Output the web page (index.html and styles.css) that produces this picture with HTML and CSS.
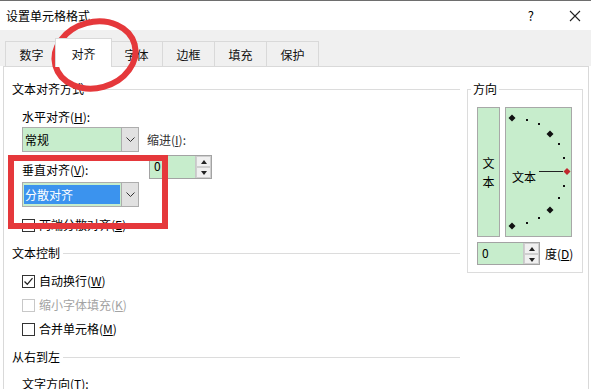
FILE: index.html
```html
<!DOCTYPE html>
<html lang="zh-CN">
<head>
  <meta charset="UTF-8" />
  <title>设置单元格格式</title>
  <link rel="stylesheet" href="styles.css">
</head>
<body>
  <div class="dialog">
    <div class="titlebar">
      <span class="title">设置单元格格式</span>
      <span class="help">?</span>
      <svg class="close" width="12" height="12" viewBox="0 0 12 12">
        <path d="M1 1 L11 11 M11 1 L1 11" stroke="#222" stroke-width="1.1" fill="none"/>
      </svg>
    </div>

    <div class="tabs">
      <div class="tab">数字</div>
      <div class="tab active">对齐</div>
      <div class="tab">字体</div>
      <div class="tab">边框</div>
      <div class="tab">填充</div>
      <div class="tab">保护</div>
    </div>

    <div class="panel">
      <div class="left">
        <div class="group-title"><span>文本对齐方式</span></div>

        <div class="align-grid">
          <div class="lbl lbl-h">水平对齐(<u>H</u>):</div>
          <div class="combo combo-h">
            <div class="combo-value">常规</div>
            <div class="combo-btn">
              <svg width="9" height="6" viewBox="0 0 9 6"><path d="M0.5 0.5 L4.5 4.5 L8.5 0.5" stroke="#333" fill="none"/></svg>
            </div>
          </div>
          <div class="lbl lbl-indent">缩进(<u>I</u>):</div>
          <div class="spin spin-indent">
            <div class="spin-value">0</div>
            <div class="spin-btns">
              <span class="up"></span>
              <span class="down"></span>
            </div>
          </div>
          <div class="lbl lbl-v">垂直对齐(<u>V</u>):</div>
          <div class="combo combo-v">
            <div class="combo-value selected">分散对齐</div>
            <div class="combo-btn">
              <svg width="9" height="6" viewBox="0 0 9 6"><path d="M0.5 0.5 L4.5 4.5 L8.5 0.5" stroke="#333" fill="none"/></svg>
            </div>
          </div>
          <div class="check check-justify">
            <span class="box"></span>
            <span>两端分散对齐(<u>E</u>)</span>
          </div>
        </div>

        <div class="group-title gap-top"><span>文本控制</span></div>
        <div class="check first">
          <span class="box">
            <svg width="11" height="11" viewBox="0 0 11 11"><path d="M1.5 5.5 L4.3 8.3 L9.5 2.2" stroke="#222" stroke-width="1.3" fill="none"/></svg>
          </span>
          <span>自动换行(<u>W</u>)</span>
        </div>
        <div class="check disabled">
          <span class="box"></span>
          <span>缩小字体填充(<u>K</u>)</span>
        </div>
        <div class="check">
          <span class="box"></span>
          <span>合并单元格(<u>M</u>)</span>
        </div>

        <div class="group-title gap-small"><span>从右到左</span></div>
        <div class="lbl lbl-dir">文字方向(<u>T</u>):</div>
      </div>

      <div class="right">
        <fieldset class="orient">
          <legend>方向</legend>
          <div class="orient-row">
            <div class="vbox"><span>文</span><span>本</span></div>
            <div class="arcbox">
              <svg width="65" height="128" viewBox="0 0 65 128">
                <g fill="#111">
                  <polygon points="6,6.5 9.5,10 6,13.5 2.5,10"/>
                  <polygon points="44,22.5 47.5,26 44,29.5 40.5,26"/>
                  <polygon points="44,98.5 47.5,102 44,105.5 40.5,102"/>
                  <polygon points="6,114.5 9.5,118 6,121.5 2.5,118"/>
                  <rect x="20" y="11" width="2" height="2"/>
                  <rect x="32" y="15" width="2" height="2"/>
                  <rect x="52" y="35" width="2" height="2"/>
                  <rect x="57" y="49" width="2" height="2"/>
                  <rect x="57" y="77" width="2" height="2"/>
                  <rect x="52" y="89" width="2" height="2"/>
                  <rect x="32" y="109" width="2" height="2"/>
                  <rect x="20" y="114" width="2" height="2"/>
                </g>
                <line x1="33" y1="63.5" x2="57" y2="63.5" stroke="#222" stroke-width="1"/>
                <polygon points="61,60 64.5,63.5 61,67 57.5,63.5" fill="#c0282d"/>
                <text class="arc-text" x="6" y="74">文本</text>
              </svg>
            </div>
          </div>
          <div class="deg-row">
            <div class="spin spin-deg">
              <div class="spin-value">0</div>
              <div class="spin-btns">
                <span class="up"></span>
                <span class="down"></span>
              </div>
            </div>
            <span>度(<u>D</u>)</span>
          </div>
        </fieldset>
      </div>
    </div>

    <!-- red hand-drawn marks over the dialog -->
    <svg class="marks" width="591" height="389" viewBox="0 0 591 389">
      <ellipse cx="95" cy="55" rx="41" ry="33" transform="rotate(-15 95 55)" fill="none" stroke="#e5383b" stroke-width="6"/>
      <rect x="11" y="158" width="154" height="68" fill="none" stroke="#e5383b" stroke-width="6"/>
    </svg>
  </div>
</body>
</html>
```

FILE: styles.css
```css
body {
  margin: 0;
  background: #fff;
  color: #000;
  font-family: "Noto Sans CJK SC", "Liberation Sans", sans-serif;
  font-size: 12px;
  line-height: 18px;
}
u {
  text-decoration: underline;
  text-underline-offset: 1px;
}
.dialog {
  position: relative;
  width: 591px;
  height: 389px;
  overflow: hidden;
  box-sizing: border-box;
  border-top: 1px solid #6e6e6e;
}
.titlebar {
  display: flex;
  align-items: center;
  height: 29px;
  padding-left: 6px;
  background: #fff;
}
.title {
  flex: 1;
}
.help {
  font-size: 13px;
  margin-right: 35px;
}
.close {
  margin-right: 10px;
}
.tabs {
  display: flex;
  align-items: flex-end;
  height: 36px;
  padding-left: 5px;
  background: #f0f0f0;
}
.tab {
  width: 53px;
  height: 25px;
  box-sizing: border-box;
  margin-right: -1px;
  border: 1px solid #d9d9d9;
  border-bottom: none;
  background: #f0f0f0;
  text-align: center;
  line-height: 25px;
  color: #111;
}
.tab.active {
  position: relative;
  z-index: 1;
  width: 57px;
  height: 29px;
  margin: 0 -2px -1px -2px;
  background: #fff;
  line-height: 30px;
}
.panel {
  display: flex;
  gap: 7px;
  height: 323px;
  margin: 0 2px 0 3px;
  padding: 13px 0 0 8px;
  border: 1px solid #d9d9d9;
  border-bottom: none;
  background: #fff;
}
.left {
  width: 448px;
}
.group-title {
  display: flex;
  align-items: center;
  height: 18px;
}
.group-title::after {
  content: "";
  flex: 1;
  margin-left: 3px;
  border-top: 1px solid #dcdcdc;
}
.gap-top {
  margin-top: 7px;
}
.gap-small {
  margin-top: 7px;
}
.align-grid {
  display: grid;
  grid-template-columns: 117px 70px;
  grid-template-rows: 20px 26px 26px 28px 30px;
  column-gap: 9px;
  margin-top: 9px;
  padding-left: 10px;
}
.lbl-h {
  grid-area: 1 / 1;
  align-self: center;
}
.combo-h {
  grid-area: 2 / 1;
  align-self: start;
}
.lbl-indent {
  grid-area: 2 / 2;
  align-self: center;
  margin-left: -1px;
  color: #333;
}
.spin-indent {
  grid-area: 3 / 2;
  align-self: end;
  margin-left: 1px;
}
.lbl-v {
  grid-area: 3 / 1;
  align-self: end;
}
.combo-v {
  grid-area: 4 / 1;
  align-self: end;
}
.check-justify {
  grid-area: 5 / 1 / 6 / 3;
  align-self: end;
  padding-left: 0 !important;
}
.combo {
  display: flex;
  height: 25px;
  box-sizing: border-box;
  border: 1px solid #adadad;
  background: #c7edcc;
}
.combo-value {
  flex: 1;
  padding-left: 2px;
  line-height: 23px;
}
.combo-value.selected {
  margin: 2px 1px 2px 1px;
  padding-left: 1px;
  background: #3b93ee;
  color: #fff;
  line-height: 19px;
}
.combo-btn {
  display: flex;
  align-items: center;
  justify-content: center;
  width: 16px;
  border-left: 1px solid #adadad;
  background: #e1e1e1;
}
.spin {
  display: flex;
  width: 63px;
  height: 24px;
  box-sizing: border-box;
  border: 1px solid #a3a3a3;
  background: #c7edcc;
}
.spin-value {
  flex: 1;
  padding-left: 4px;
  line-height: 20px;
}
.spin-btns {
  display: flex;
  flex-direction: column;
  width: 15px;
  border-left: 1px solid #c8c8c8;
}
.spin-btns span {
  position: relative;
  flex: 1;
  border: 1px solid #cfcfcf;
  background: #f0f0f0;
}
.spin-btns span::after {
  content: "";
  position: absolute;
  left: 4px;
  top: 3px;
  border-left: 3px solid transparent;
  border-right: 3px solid transparent;
}
.spin-btns .up::after {
  border-bottom: 4px solid #222;
}
.spin-btns .down::after {
  border-top: 4px solid #222;
}
.check {
  display: flex;
  align-items: center;
  gap: 4px;
  height: 24px;
  padding-left: 10px;
}
.check.first {
  margin-top: 7px;
}
.box {
  display: flex;
  align-items: center;
  justify-content: center;
  width: 13px;
  height: 13px;
  box-sizing: border-box;
  border: 1px solid #333;
  background: #fff;
}
.check.disabled {
  color: #a3a3a3;
}
.check.disabled .box {
  border-color: #c8c8c8;
}
.lbl-dir {
  margin-top: 9px;
  padding-left: 10px;
}
.right {
  width: 116px;
}
.orient {
  width: 116px;
  box-sizing: border-box;
  min-width: 0;
  margin: 0;
  padding: 0 0 7px 9px;
  border: 1px solid #dcdcdc;
}
.orient legend {
  margin-left: -6px;
  padding: 0 2px;
  line-height: 18px;
}
.orient-row {
  display: flex;
  gap: 5px;
  margin-top: 9px;
}
.vbox {
  display: flex;
  flex-direction: column;
  align-items: center;
  justify-content: center;
  width: 23px;
  height: 130px;
  box-sizing: border-box;
  border: 1px solid #a8a8a8;
  background: #c7edcc;
  line-height: 19px;
}
.arcbox {
  width: 67px;
  height: 130px;
  box-sizing: border-box;
  border: 1px solid #a8a8a8;
  background: #c7edcc;
}
.arcbox svg {
  display: block;
}
.arc-text {
  font-family: "Noto Sans CJK SC", sans-serif;
  font-size: 12px;
  fill: #000;
}
.deg-row {
  display: flex;
  align-items: center;
  gap: 5px;
  margin-top: 5px;
}
.spin-deg {
  height: 23px;
}
.marks {
  position: absolute;
  top: -1px;
  left: 0;
  pointer-events: none;
}
```
